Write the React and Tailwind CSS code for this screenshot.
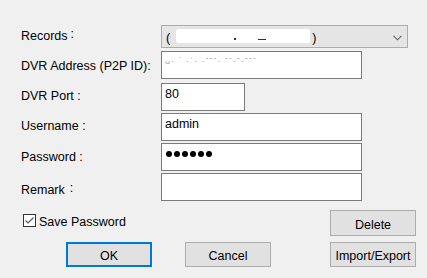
import React from 'react';

const font = { fontFamily: '"Liberation Sans", Arial, sans-serif' };

const TextBox = ({ width = 'w-[201px]', children, className = '' }) => (
  <div className={`h-[28px] ${width} bg-white border border-[#7a7a7a] pl-[3px] pt-[3px] ${className}`}>
    {children}
  </div>
);

const Button = ({ children, primary = false, className = '' }) => (
  <div
    className={`w-[86px] h-[25px] flex justify-center bg-[#e1e1e1] ${
      primary ? 'border-2 border-[#0078d7] pt-[5px]' : 'border border-[#adadad] pt-[6px]'
    } ${className}`}
  >
    {children}
  </div>
);

const App = () => {
  return (
    <div
      className="w-[427px] h-[278px] bg-[#f0f0f0] text-black text-[12.5px] leading-[14px] overflow-hidden pt-[25px]"
      style={font}
    >
      {/* Form fields */}
      <div className="flex">
        <div className="w-[161px] pl-[21px] pt-[4px] flex flex-col">
          <div className="flex">
            <span>Records</span>
            <span className="relative -top-[2px] ml-[3px]">:</span>
          </div>
          <div className="mt-[16px]">DVR Address (P2P ID):</div>
          <div className="mt-[16px]">DVR Port :</div>
          <div className="mt-[16px]">Username :</div>
          <div className="mt-[17px]">Password :</div>
          <div className="mt-[19px] flex">
            <span>Remark</span>
            <span className="relative -top-[2px] ml-[5px]">:</span>
          </div>
        </div>

        <div className="flex flex-col">
          {/* Records combobox */}
          <div className="h-[23px] w-[247px] bg-[#e5e5e5] border border-[#adadad] flex items-start pl-[4px] pt-[5px] pr-[5px]">
            <span>(</span>
            <div className="relative mt-[-2px] ml-[6px] w-[134px] h-[14px] bg-white rounded-[2px]">
              <span className="absolute left-[58px] top-[9px] w-[2px] h-[2px] bg-[#333]" />
              <span className="absolute left-[82px] top-[10px] w-[8px] h-[1px] bg-[#333]" />
            </div>
            <span className="ml-[2px]">)</span>
            <svg className="ml-auto mt-[4px]" width="9" height="6" viewBox="0 0 9 6">
              <polyline points="0.5,0.8 4.5,4.8 8.5,0.8" fill="none" stroke="#606060" strokeWidth="1.1" />
            </svg>
          </div>

          <TextBox className="mt-[3px]">
            <span className="text-[9px] tracking-[1px] text-[#9a9a9a] relative top-[-2px]">
              ᴗ· ˙ ·ˈ·  ·ˉˉˉ· ˉˉ·ˉ·ˉˉˉ
            </span>
          </TextBox>
          <TextBox width="w-[84px]" className="mt-[4px]">80</TextBox>
          <TextBox className="mt-[2px]">admin</TextBox>
          <TextBox className="mt-[2px] !pt-[7px] !pl-[4px]">
            <div className="flex gap-[2px]">
              {[0, 1, 2, 3, 4, 5].map((i) => (
                <span key={i} className="w-[6px] h-[6px] rounded-full bg-black" />
              ))}
            </div>
          </TextBox>
          <TextBox className="mt-[2px]" />
        </div>
      </div>

      {/* Save password + Delete */}
      <div className="mt-[9px] flex items-start pl-[21px] pr-[11px]">
        <div className="flex items-start pt-[4px] ml-[2px]">
          <svg width="13" height="13" viewBox="0 0 13 13">
            <rect x="0.5" y="0.5" width="12" height="12" fill="#fff" stroke="#333" />
            <polyline points="2.5,6.5 5,9 10.5,3.5" fill="none" stroke="#555" strokeWidth="1.1" />
          </svg>
          <span className="ml-[3px] mt-[1px]">Save Password</span>
        </div>
        <Button className="ml-auto !h-[26px] !pt-[7px]">Delete</Button>
      </div>

      {/* Dialog buttons */}
      <div className="mt-[6px] flex pl-[21px]">
        <Button primary className="ml-[45px]">OK</Button>
        <Button className="ml-[33px]">Cancel</Button>
        <Button className="ml-[59px]">Import/Export</Button>
      </div>
    </div>
  );
};

export default App;
